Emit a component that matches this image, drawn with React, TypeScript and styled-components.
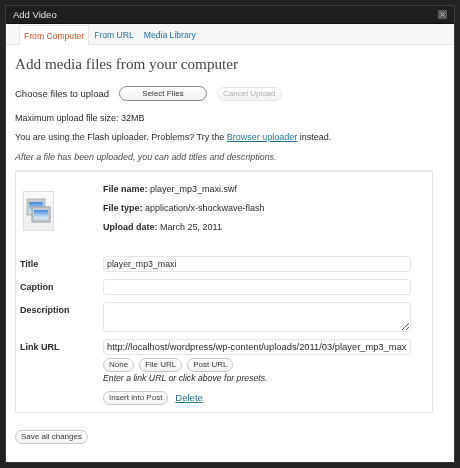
import React from 'react';
import styled, { createGlobalStyle } from 'styled-components';

const GlobalStyle = createGlobalStyle`
  html, body {
    margin: 0;
    padding: 0;
    width: 460px;
    height: 468px;
    overflow: hidden;
    background: #232323;
  }
`;

const sans = `"Liberation Sans", Arial, sans-serif`;

// Fundo escuro em volta do modal
const Backdrop = styled.div`
  width: 460px;
  height: 468px;
  box-sizing: border-box;
  padding: 6px;
  background: #232323;
  font-family: ${sans};
  filter: blur(0.25px);
`;

const Modal = styled.div`
  height: 100%;
  box-sizing: border-box;
  display: flex;
  flex-direction: column;
  background: #fff;
  box-shadow: 0 0 0 1px #3c3c3c;
`;

const TitleBar = styled.div`
  height: 18px;
  flex: none;
  box-sizing: border-box;
  display: flex;
  align-items: center;
  justify-content: space-between;
  padding: 0 7px 0 7px;
  background: #1f1f1f;
  border-bottom: 1px solid #111;
`;

const TitleText = styled.span`
  color: #e2e2e2;
  font-size: 9.5px;
`;

const CloseButton = styled.span`
  width: 9px;
  height: 9px;
  display: flex;
  align-items: center;
  justify-content: center;
  background: #5a5a5a;
  border-radius: 1px;
`;

const TabBar = styled.div`
  height: 21px;
  flex: none;
  box-sizing: border-box;
  display: flex;
  align-items: flex-end;
  padding-left: 13px;
  background: #f6f8f8;
  border-bottom: 1px solid #e4e4e4;
`;

const Tab = styled.a<{ $active?: boolean }>`
  height: ${(p) => (p.$active ? '20px' : '19px')};
  box-sizing: border-box;
  padding: 0 ${(p) => (p.$active ? '4px' : '5px')};
  margin-bottom: ${(p) => (p.$active ? '-1px' : '0')};
  display: flex;
  align-items: center;
  font-size: 8.6px;
  color: ${(p) => (p.$active ? '#d54e21' : '#21759b')};
  background: ${(p) => (p.$active ? '#fff' : 'transparent')};
  border: ${(p) => (p.$active ? '1px solid #e4e4e4' : 'none')};
  border-bottom: none;
  border-radius: 2px 2px 0 0;
`;

const Content = styled.div`
  flex: 1;
  display: flex;
  flex-direction: column;
  padding: 9px 0 0 9px;
  color: #2b2b2b;
  font-size: 9px;
`;

const Heading = styled.h3`
  margin: 0;
  font-family: "Liberation Serif", Georgia, serif;
  font-weight: normal;
  font-size: 15.2px;
  line-height: 20px;
  color: #464646;
`;

const UploadRow = styled.div`
  margin-top: 12px;
  margin-bottom: 2px;
  display: flex;
  align-items: center;
  height: 15px;
  font-size: 9.5px;
`;

const Button = styled.button<{ $disabled?: boolean }>`
  display: inline-flex;
  align-items: center;
  justify-content: center;
  box-sizing: border-box;
  height: 14px;
  margin: 0;
  padding: 0 5px;
  font-family: ${sans};
  font-size: 8px;
  color: ${(p) => (p.$disabled ? '#aaa' : '#3c3c3c')};
  background: linear-gradient(#fff, #f2f2f2);
  border: 1px solid ${(p) => (p.$disabled ? '#e6e6e6' : '#c6c6c6')};
  border-radius: 8px;
  white-space: nowrap;
`;

const SelectButton = styled(Button)`
  width: 88px;
  height: 15px;
  margin-left: 10px;
  margin-right: 10px;
  color: #333;
  border-color: #888;
`;

const Note = styled.p<{ $italic?: boolean }>`
  margin: 9.5px 0 0;
  line-height: 10px;
  font-size: ${(p) => (p.$italic ? '8.9px' : '9px')};
  font-style: ${(p) => (p.$italic ? 'italic' : 'normal')};
  color: ${(p) => (p.$italic ? '#4c4c4c' : '#2b2b2b')};
`;

const Link = styled.a`
  color: #21759b;
  text-decoration: underline;
`;

const Card = styled.div`
  width: 418px;
  height: 243px;
  box-sizing: border-box;
  margin-top: 8px;
  border: 1px solid #e6e6e6;
  border-top-width: 2px;
  padding: 12px 0 0 4px;
`;

const FileInfo = styled.div`
  display: flex;
  height: 65px;
`;

const Thumb = styled.div`
  width: 31px;
  height: 40px;
  margin: 7px 49px 0 3px;
  flex: none;
  box-sizing: border-box;
  border: 1px solid #ddd;
  background: linear-gradient(#fafafa, #eee);
`;

const MetaList = styled.div`
  display: flex;
  flex-direction: column;
  gap: 9px;
  line-height: 10px;
`;

const Field = styled.div`
  display: grid;
  grid-template-columns: 83px 308px;
  margin-top: 7px;
`;

const Label = styled.label`
  font-weight: bold;
  font-size: 9px;
  line-height: 16px;
  color: #2b2b2b;
`;

const TextInput = styled.input<{ $wide?: boolean }>`
  display: block;
  width: 100%;
  height: 16px;
  box-sizing: border-box;
  margin: 0;
  border: 1px solid #e6e6e6;
  border-radius: 3px;
  padding: 0 3px;
  font-family: ${sans};
  font-size: ${(p) => (p.$wide ? '9.35px' : '8.8px')};
  color: #2b2b2b;
  background: #fff;
  outline: none;
`;

const TextArea = styled.textarea`
  display: block;
  width: 100%;
  height: 30px;
  box-sizing: border-box;
  margin: 0;
  border: 1px solid #e6e6e6;
  border-radius: 3px;
  padding: 0 3px;
  background: #fff;
  outline: none;
`;

const Presets = styled.div`
  display: flex;
  gap: 5px;
  margin-top: 3px;
`;

const Hint = styled.p`
  margin: 1px 0 0;
  font-size: 8.7px;
  line-height: 10px;
  font-style: italic;
  color: #2b2b2b;
`;

const Actions = styled.div`
  display: flex;
  align-items: center;
  gap: 7px;
  margin-top: 8px;
`;

const DeleteLink = styled(Link)`
  font-size: 9.5px;
`;

const SaveButton = styled(Button)`
  align-self: flex-start;
  margin-top: 17px;
`;

const FileIcon = () => (
  <svg width="29" height="38" viewBox="0 0 29 38">
    <defs>
      <linearGradient id="glass" x1="0" y1="0" x2="0" y2="1">
        <stop offset="0" stopColor="#3f86dc" />
        <stop offset="0.55" stopColor="#a3c9ee" />
        <stop offset="1" stopColor="#e2ebf5" />
      </linearGradient>
    </defs>
    <rect x="3" y="7" width="18" height="16" fill="#c9cdd2" stroke="#b3b7bc" />
    <rect x="5" y="10" width="14" height="11" fill="url(#glass)" />
    <rect x="8" y="15" width="18" height="15" fill="#c9cdd2" stroke="#9a9fa5" />
    <rect x="10" y="18" width="14" height="9" fill="url(#glass)" />
  </svg>
);

export default function App() {
  return (
    <>
      <GlobalStyle />
      <Backdrop>
        <Modal>
          <TitleBar>
            <TitleText>Add Video</TitleText>
            <CloseButton>
              <svg width="5" height="5" viewBox="0 0 5 5">
                <path d="M0.5 0.5l4 4M4.5 0.5l-4 4" stroke="#bbb" strokeWidth="1" />
              </svg>
            </CloseButton>
          </TitleBar>
          <TabBar>
            <Tab $active>From Computer</Tab>
            <Tab>From URL</Tab>
            <Tab>Media Library</Tab>
          </TabBar>
          <Content>
            <Heading>Add media files from your computer</Heading>
            <UploadRow>
              Choose files to upload
              <SelectButton>Select Files</SelectButton>
              <Button $disabled>Cancel Upload</Button>
            </UploadRow>
            <Note>Maximum upload file size: 32MB</Note>
            <Note>
              You are using the Flash uploader. Problems? Try the <Link>Browser uploader</Link> instead.
            </Note>
            <Note $italic>After a file has been uploaded, you can add titles and descriptions.</Note>
            <Card>
              <FileInfo>
                <Thumb>
                  <FileIcon />
                </Thumb>
                <MetaList>
                  <span><b>File name:</b> player_mp3_maxi.swf</span>
                  <span><b>File type:</b> application/x-shockwave-flash</span>
                  <span><b>Upload date:</b> March 25, 2011</span>
                </MetaList>
              </FileInfo>
              <Field>
                <Label>Title</Label>
                <TextInput readOnly value="player_mp3_maxi" />
              </Field>
              <Field>
                <Label>Caption</Label>
                <TextInput readOnly />
              </Field>
              <Field>
                <Label>Description</Label>
                <TextArea readOnly />
              </Field>
              <Field>
                <Label>Link URL</Label>
                <div>
                  <TextInput $wide readOnly value="http://localhost/wordpress/wp-content/uploads/2011/03/player_mp3_maxi.swf" />
                  <Presets>
                    <Button>None</Button>
                    <Button>File URL</Button>
                    <Button>Post URL</Button>
                  </Presets>
                  <Hint>Enter a link URL or click above for presets.</Hint>
                  <Actions>
                    <Button>Insert into Post</Button>
                    <DeleteLink>Delete</DeleteLink>
                  </Actions>
                </div>
              </Field>
            </Card>
            <SaveButton>Save all changes</SaveButton>
          </Content>
        </Modal>
      </Backdrop>
    </>
  );
}
